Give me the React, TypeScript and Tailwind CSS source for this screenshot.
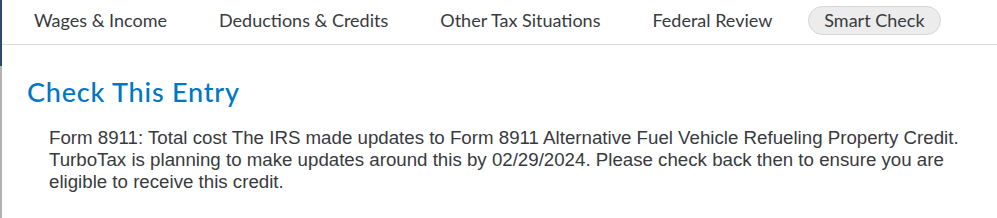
import React from "react";

const tabs = ["Wages & Income", "Deductions & Credits", "Other Tax Situations", "Federal Review"];

export default function App() {
  return (
    <div className="w-[997px] h-[218px] bg-white flex overflow-hidden">
      <div className="w-[2px] flex flex-col shrink-0">
        <div className="h-[66px] bg-[#2d4b6f]" />
        <div className="flex-1 bg-[#b3b3b3]" />
      </div>
      <div className="flex-1 flex flex-col">
        <nav className="h-[45px] pb-[4px] border-b border-[#d9dbdd] flex items-center pl-[6px] text-[18px] text-[#393a3d] font-['Lato',sans-serif]">
          {tabs.map((t) => (
            <div key={t} className="px-[26px] whitespace-nowrap">
              {t}
            </div>
          ))}
          <div className="ml-[10px] h-[29px] px-[15px] flex items-center rounded-full bg-[#ececec] border border-[#d6d6d6] whitespace-nowrap">
            Smart Check
          </div>
        </nav>
        <div className="pl-[25px] pt-[31px]">
          <h1 className="text-[27px] leading-[32px] font-medium tracking-[0.8px] text-[#0077c5] font-['Lato',sans-serif]">
            Check This Entry
          </h1>
          <p className="mt-[19px] ml-[22px] w-[930px] text-[18.7px] leading-[22px] text-[#393a3d] font-['Liberation_Sans',Arial,sans-serif]">
            Form 8911: Total cost The IRS made updates to Form 8911 Alternative Fuel Vehicle Refueling Property Credit. TurboTax is planning to make updates around this by 02/29/2024. Please check back then to ensure you are eligible to receive this credit.
          </p>
        </div>
      </div>
    </div>
  );
}
